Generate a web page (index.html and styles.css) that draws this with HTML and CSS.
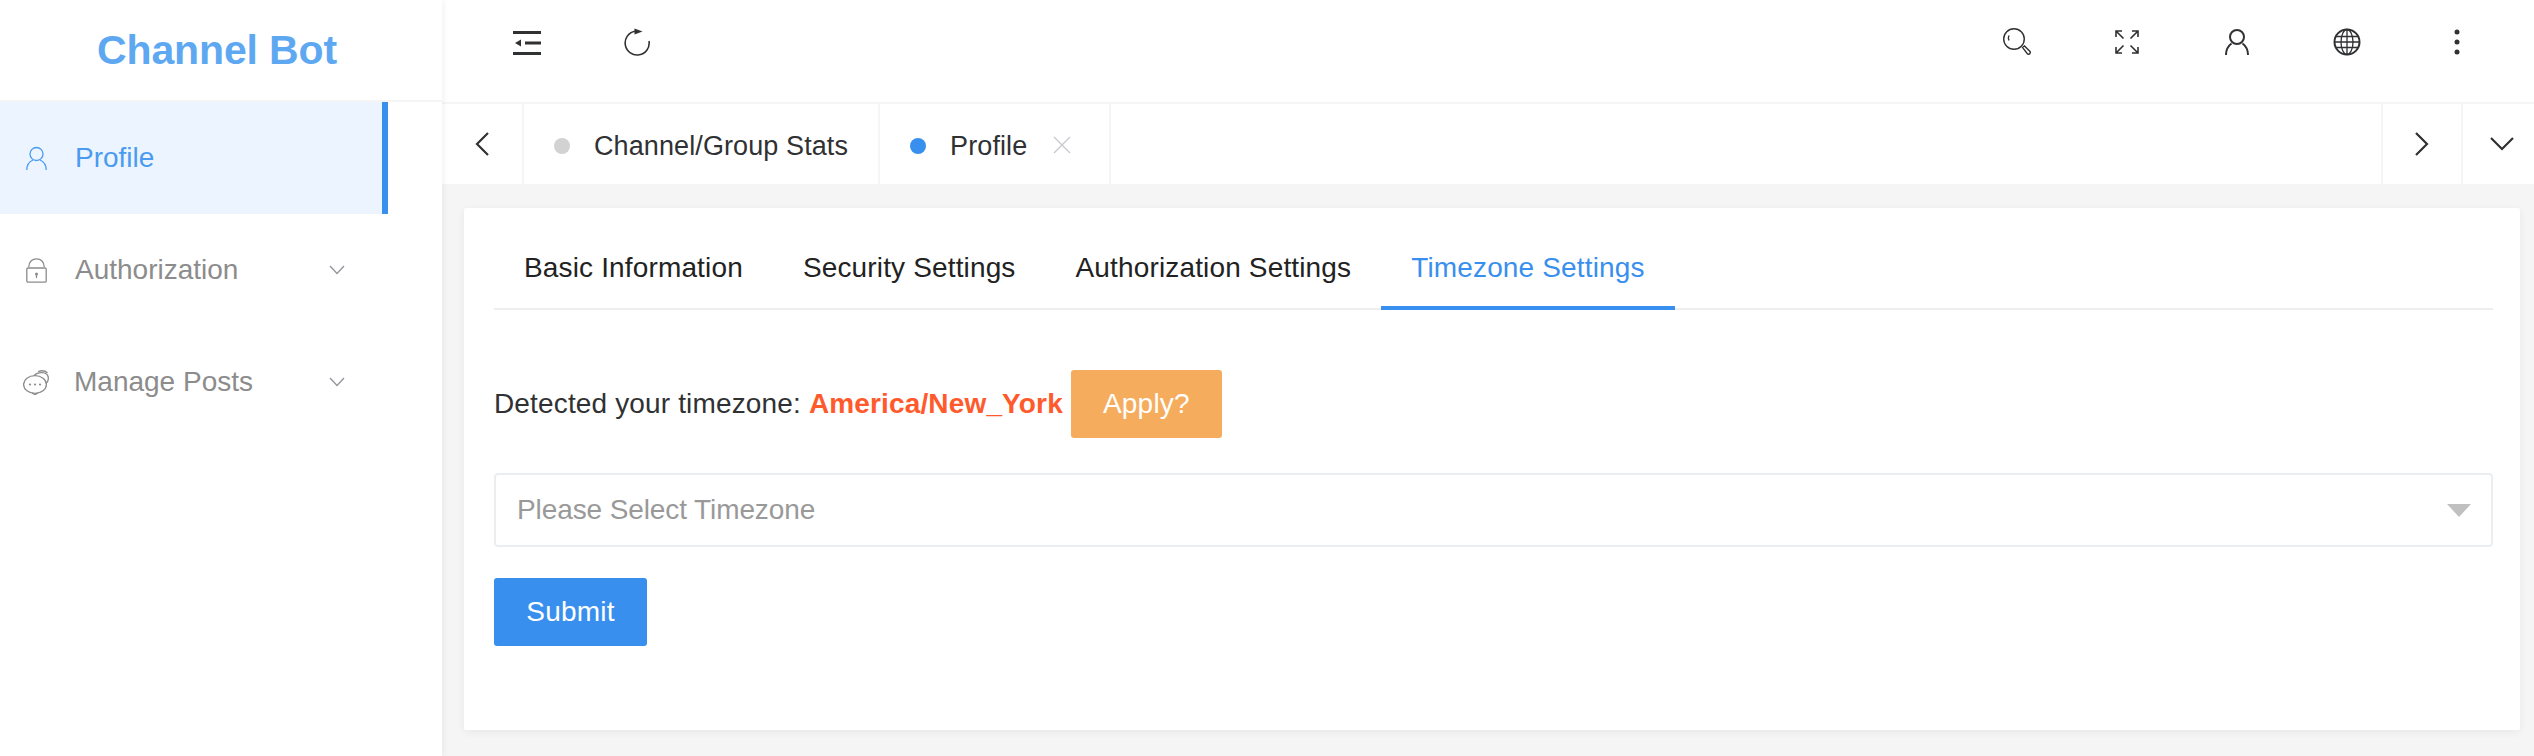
FILE: index.html
```html
<!DOCTYPE html>
<html lang="en">
<head>
<meta charset="utf-8">
<title>Channel Bot</title>
<link rel="stylesheet" href="styles.css">
</head>
<body>
<div class="app">
  <aside class="sidebar">
    <div class="logo">Channel Bot</div>
    <nav class="menu">
      <a class="menu-item active">
        <svg class="menu-icon" viewBox="0 0 21 24"><circle cx="10.500" cy="7.500" r="6.500"/><path d="M.8 23.500C.8 18.500 3.500 15 7 13.500M14 13.500c3.500 1.500 6.200 5 6.200 10"/></svg>
        <span class="menu-label">Profile</span>
      </a>
      <a class="menu-item">
        <svg class="menu-icon" viewBox="0 0 21 25"><path d="M2.800 9C2.800 4 6 .8 10.500.8S18.200 4 18.200 9"/><rect x=".8" y="10" width="19.400" height="14.200" rx="1.200"/><circle class="fill" cx="10.500" cy="16" r="1.500"/><path d="M10.500 16.500v3.500"/></svg>
        <span class="menu-label">Authorization</span>
        <svg class="menu-caret" viewBox="0 0 16 10"><path d="M1 1l7 7.500L15 1"/></svg>
      </a>
      <a class="menu-item">
        <svg class="menu-icon wide" viewBox="0 0 26 25"><ellipse cx="12" cy="14.500" rx="11.400" ry="8.800"/><path d="M9 23l3 1.700 3-1.700"/><path d="M11 5.500C15 1.500 24 1.500 25.200 7c.5 2.500-.6 5-2.200 6.500"/><path d="M15 1.500c3.500-1.200 7.500-.6 9.500 1.500"/><circle class="fill" cx="7" cy="14.500" r="1.100"/><circle class="fill" cx="12" cy="14.500" r="1.100"/><circle class="fill" cx="17" cy="14.500" r="1.100"/></svg>
        <span class="menu-label">Manage Posts</span>
        <svg class="menu-caret" viewBox="0 0 16 10"><path d="M1 1l7 7.500L15 1"/></svg>
      </a>
    </nav>
  </aside>
  <div class="content">
    <header class="topbar">
      <div class="top-left">
        <svg class="top-icon fold" viewBox="0 0 28 26"><path d="M0 2.500h28M12 13h16M0 23.500h28" stroke-width="3"/><path class="fill" d="M8 9.500v7L2 13z"/></svg>
        <svg class="top-icon refresh" viewBox="0 0 26 30"><path d="M11 3.200A12 12 0 1 0 25 13"/><path class="fill" d="M10.500.5l8 3-8 3z"/></svg>
      </div>
      <div class="top-right">
        <svg class="top-icon search" viewBox="0 0 28 28"><circle cx="11" cy="11" r="10.300"/><path d="M6 7.500C5.200 9 5.200 11 6 12.500"/><path d="M19.500 19.500l2-1.500 5.500 5.500c1 1.500-1 3.500-2.500 2.500z"/></svg>
        <svg class="top-icon expand" viewBox="0 0 24 24"><path d="M1 7V1h6M1 1l7.500 7.500M17 1h6v6M23 1l-7.500 7.500M1 17v6h6M1 23l7.500-7.500M17 23h6v-6M23 23l-7.500-7.500"/></svg>
        <svg class="top-icon user" viewBox="0 0 24 26"><circle cx="12" cy="8" r="7"/><path d="M1 26c0-5 2-9 5.500-11.500M17.500 14.500c3.500 2.500 5.500 6.500 5.500 11.500"/></svg>
        <svg class="top-icon globe" viewBox="0 0 28 28"><circle cx="14" cy="14" r="12.500" stroke-width="2"/><ellipse cx="14" cy="14" rx="6" ry="12.500"/><path d="M14 1.500v25M3 8.500h22M1.500 14h25M3 19.500h22"/></svg>
        <svg class="top-icon dots" viewBox="0 0 6 26"><circle class="fill" cx="3" cy="3" r="2.500"/><circle class="fill" cx="3" cy="13" r="2.500"/><circle class="fill" cx="3" cy="23" r="2.500"/></svg>
      </div>
    </header>
    <div class="tagsbar">
      <button class="tag-nav prev"><svg class="tag-chevron" viewBox="0 0 14 24"><path d="M13 1L2 12l11 11"/></svg></button>
      <div class="tag"><i class="dot"></i><span>Channel/Group Stats</span></div>
      <div class="tag"><i class="dot on"></i><span>Profile</span><svg class="tag-close" viewBox="0 0 18 18"><path d="M1 1l16 16M17 1L1 17"/></svg></div>
      <div class="tag-space"></div>
      <button class="tag-nav next"><svg class="tag-chevron" viewBox="0 0 14 24"><path d="M1 1l11 11L1 23"/></svg></button>
      <button class="tag-nav more"><svg class="tag-down" viewBox="0 0 24 14"><path d="M1 1l11 11L23 1"/></svg></button>
    </div>
    <main class="main">
      <section class="card">
        <div class="tabs">
          <a class="tab">Basic Information</a>
          <a class="tab">Security Settings</a>
          <a class="tab">Authorization Settings</a>
          <a class="tab current">Timezone Settings</a>
        </div>
        <div class="detect">
          <span>Detected your timezone:&nbsp;</span><strong class="zone">America/New_York</strong>
          <button class="btn apply">Apply?</button>
        </div>
        <div class="select">
          <span class="placeholder">Please Select Timezone</span>
          <i class="select-arrow"></i>
        </div>
        <button class="btn submit">Submit</button>
      </section>
    </main>
  </div>
</div>
</body>
</html>
```
FILE: styles.css
```css
* { box-sizing: border-box; }
html, body { margin: 0; height: 100%; }
body {
  font-family: "Liberation Sans", Arial, sans-serif;
  font-size: 28px;
  color: #303133;
  background: #f5f5f5;
  overflow: hidden;
}
svg { display: block; fill: none; stroke: currentColor; stroke-width: 1.6; flex: none; }
svg .fill { fill: currentColor; stroke: none; }
.app { display: flex; height: 756px; }

.sidebar {
  width: 442px;
  flex: none;
  background: #fff;
  box-shadow: 2px 0 6px rgba(0, 0, 0, .05);
  position: relative;
  z-index: 2;
}
.logo {
  height: 102px;
  border-bottom: 2px solid #f5f5f5;
  display: flex;
  align-items: center;
  justify-content: center;
  padding-right: 8px;
  font-size: 41px;
  font-weight: 700;
  letter-spacing: -.15px;
  color: #5ea8f2;
}
.menu { width: 388px; }
.menu-item {
  height: 112px;
  display: flex;
  align-items: center;
  padding-left: 26px;
  color: #8c8c8c;
}
.menu-item.active {
  background: #ecf5ff;
  color: #4a9bef;
  border-right: 6px solid #398fee;
}
.menu-icon { width: 21px; height: 25px; margin-right: 28px; stroke-width: 1.300; }
.menu-icon.wide { width: 26px; height: 25px; margin: 0 25px 0 -3px; }
.menu-label { font-size: 28px; line-height: 34px; }
.menu-caret { width: 16px; height: 10px; margin-left: auto; margin-right: 43px; stroke-width: 1.300; color: #909399; }

.content { flex: 1; min-width: 0; display: flex; flex-direction: column; }
.topbar {
  height: 104px;
  flex: none;
  background: #fff;
  border-bottom: 2px solid #f5f5f5;
  display: flex;
  align-items: flex-start;
  justify-content: space-between;
  padding-top: 28px;
  color: #303133;
}
.top-left, .top-right { display: flex; align-items: center; }
.top-left { padding-left: 71px; }
.top-right { padding-right: 74px; }
.top-icon.fold { width: 28px; height: 26px; }
.top-icon.refresh { width: 26px; height: 30px; margin-left: 83px; stroke-width: 1.600; }
.top-icon.search { width: 28px; height: 28px; stroke-width: 1.400; }
.top-icon.expand { width: 24px; height: 24px; margin-left: 84px; }
.top-icon.user { width: 24px; height: 26px; margin-left: 86px; stroke-width: 2; }
.top-icon.globe { width: 28px; height: 28px; margin-left: 84px; stroke-width: 1.300; }
.top-icon.dots { width: 6px; height: 26px; margin-left: 93px; }

.tagsbar { height: 80px; flex: none; background: #fff; display: flex; }
.tag-nav {
  border: 0;
  padding: 0;
  background: none;
  color: #303133;
  display: flex;
  align-items: center;
  justify-content: center;
}
.tag-nav.prev { width: 82px; border-right: 2px solid #f5f5f5; }
.tag-nav.next { width: 80px; border-left: 2px solid #f5f5f5; }
.tag-nav.more { width: 73px; border-left: 2px solid #f5f5f5; padding-left: 7px; }
.tag-chevron { width: 14px; height: 24px; stroke-width: 2.200; }
.tag-down { width: 24px; height: 14px; stroke-width: 2.200; }
.tag {
  display: flex;
  align-items: center;
  padding: 4px 30px 0 30px;
  border-right: 2px solid #f5f5f5;
  font-size: 27px;
  letter-spacing: .1px;
}
.dot { width: 16px; height: 16px; border-radius: 50%; background: #d2d2d2; margin-right: 24px; }
.dot.on { background: #398fee; }
.tag-close { width: 18px; height: 18px; margin: -2px 8px 0 26px; color: #c8c9cc; stroke-width: 1.300; }
.tag-space { flex: 1; }

.main { flex: 1; padding: 24px 14px 26px 22px; min-height: 0; }
.card {
  height: 100%;
  background: #fff;
  border-radius: 2px;
  box-shadow: 0 2px 8px rgba(0, 0, 0, .06);
  padding: 0 27px 0 30px;
}
.tabs {
  height: 102px;
  display: flex;
  align-items: stretch;
  border-bottom: 2px solid #eeeeee;
}
.tab {
  display: flex;
  align-items: center;
  padding: 22px 30px 0;
  font-size: 28px;
  letter-spacing: .15px;
  height: 102px;
  border-bottom: 4px solid transparent;
  color: #222;
}
.tab.current { color: #398fee; border-bottom-color: #398fee; }
.detect { display: flex; align-items: center; margin-top: 60px; height: 68px; letter-spacing: .15px; }
.zone { color: #ff5a2c; font-weight: 700; }
.btn {
  font: inherit;
  letter-spacing: .2px;
  color: #fff;
  border: 0;
  border-radius: 3px;
  height: 68px;
  padding: 0;
  display: block;
}
.apply { width: 151px; margin-left: 8px; background: #f5ad5d; }
.select {
  height: 74px;
  margin-top: 35px;
  border: 2px solid #ebeef0;
  border-radius: 4px;
  display: flex;
  align-items: center;
  justify-content: space-between;
  padding: 0 20px 0 21px;
  color: #999;
}
.placeholder { letter-spacing: -.1px; }
.select-arrow {
  width: 0;
  height: 0;
  border-left: 12px solid transparent;
  border-right: 12px solid transparent;
  border-top: 13px solid #c0c0c0;
}
.submit { width: 153px; margin-top: 31px; background: #398fee; }
```
